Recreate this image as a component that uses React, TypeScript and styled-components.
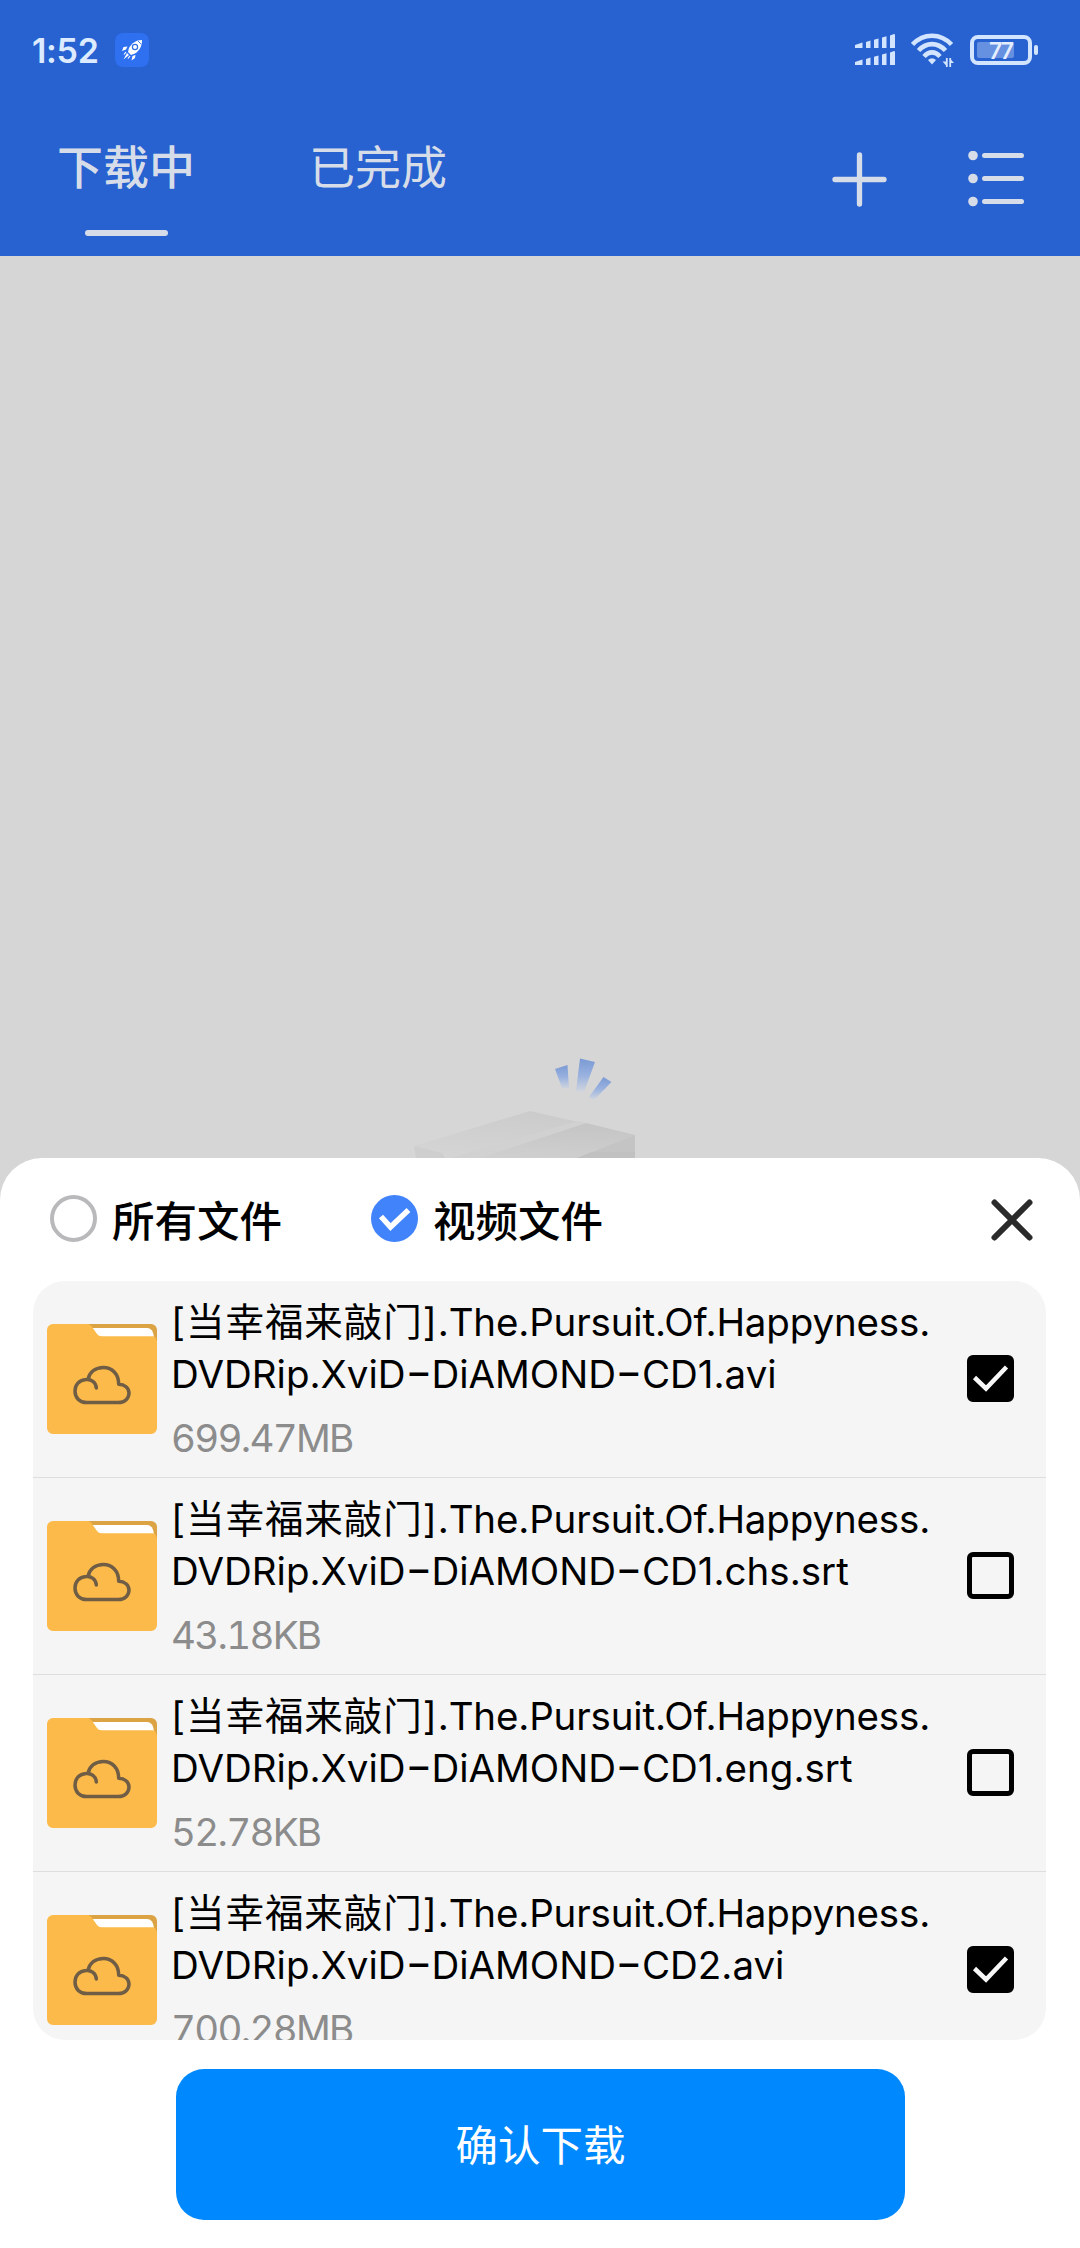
import React, { Fragment, useState } from "react";
import styled, { createGlobalStyle } from "styled-components";

const GlobalStyle = createGlobalStyle`
  *, *::before, *::after { box-sizing: border-box; }
  body { margin: 0; background: #d6d6d6; }
  button { font: inherit; border: 0; padding: 0; background: none; color: inherit; }
  svg { display: block; flex: none; }
`;

const Page = styled.div`
  width: 1080px;
  height: 2248px;
  display: flex;
  flex-direction: column;
  overflow: hidden;
  background: #d6d6d6;
  font-family: Inter, "Noto Sans CJK SC", sans-serif;
`;

const Header = styled.header`
  height: 256px;
  flex: none;
  background: #2862d1;
  color: #d7dde8;
`;

const StatusBar = styled.div`
  height: 100px;
  display: flex;
  align-items: center;
  justify-content: space-between;
  padding: 0 42px 0 32px;
`;

const StatusGroup = styled.div<{ $gap: number }>`
  display: flex;
  align-items: center;
  gap: ${(p) => p.$gap}px;
`;

const Clock = styled.span`
  width: 67px;
  padding-top: 1px;
  font-size: 34px;
  line-height: 40px;
  font-weight: 600;
  letter-spacing: -0.3px;
  white-space: nowrap;
  color: #dcebff;
`;

const RocketBadge = styled.span`
  width: 34px;
  height: 34px;
  display: grid;
  place-items: center;
  border-radius: 8px;
  background: #2f70f0;
`;

const BatteryText = styled.text`
  font: 600 23px Inter, sans-serif;
  fill: #e4eeff;
`;

const NavBar = styled.nav`
  height: 156px;
  display: flex;
  justify-content: space-between;
  padding: 0 56px 0 57px;
`;

const Tabs = styled.div`
  display: flex;
  gap: 114px;
`;

const Tab = styled.button<{ $active: boolean }>`
  width: 138px;
  display: flex;
  flex-direction: column;
  align-items: center;
  padding-top: 36px;
  font-size: 46px;
  line-height: 62px;
  white-space: nowrap;
  font-weight: ${(p) => (p.$active ? 500 : 400)};

  &::after {
    content: "";
    width: 83px;
    height: 6px;
    margin-top: 32px;
    border-radius: 3px;
    background: ${(p) => (p.$active ? "#d7dde8" : "transparent")};
  }
`;

const Actions = styled.div`
  display: flex;
  gap: 81px;
  padding-top: 51px;
`;

const EmptyArea = styled.main`
  height: 902px;
  flex: none;
  display: flex;
  align-items: flex-end;
  justify-content: center;
  padding-right: 40px;
`;

const Sheet = styled.section`
  flex: 1;
  display: flex;
  flex-direction: column;
  border-radius: 42px 42px 0 0;
  background: #fff;
`;

const SheetHeader = styled.div`
  width: 100%;
  height: 123px;
  flex: none;
  display: flex;
  align-items: flex-start;
  padding: 37px 47px 0 50px;
`;

const FilterOption = styled.button`
  width: 321px;
  display: flex;
  align-items: center;
  gap: 15px;
  height: 47px;
  color: #000;
  font-size: 42.5px;
  font-weight: 500;
  white-space: nowrap;
`;

const Radio = styled.span<{ $on: boolean }>`
  width: 47px;
  height: 47px;
  flex: none;
  display: grid;
  place-items: center;
  border-radius: 50%;
  border: ${(p) => (p.$on ? "0" : "4px solid #b9b9bb")};
  background: ${(p) => (p.$on ? "#4083fb" : "#fff")};
`;

const CloseButton = styled.button`
  margin: 4px 0 0 auto;
`;

const FileList = styled.ul`
  width: 1013px;
  height: 759px;
  flex: none;
  margin: 0 0 0 33px;
  padding: 0;
  overflow: hidden;
  list-style: none;
  border-radius: 32px;
  background: #f5f5f5;
`;

const FileRow = styled.li`
  height: 197px;
  display: flex;
  align-items: flex-start;
  padding: 0 32px 0 14px;
  border-bottom: 1px solid #dedede;
`;

const FolderSlot = styled.span`
  padding-top: 43px;
`;

const FileInfo = styled.div`
  flex: 1;
  padding: 15px 0 0 14px;
`;

const FileName = styled.div`
  display: flex;
  flex-direction: column;
  font-size: 38.5px;
  line-height: 52px;
  color: #000;
`;

const NameLine = styled.span<{ $spacing?: number }>`
  height: 52px;
  white-space: nowrap;
  letter-spacing: ${(p) => p.$spacing ?? 0}px;
`;

const Bracketed = styled.span`
  letter-spacing: 0.95px;
`;

const Dash = styled.span`
  display: inline-block;
  margin: 0 4px;
  transform: scaleX(1.5);
  font-weight: 500;
  font-feature-settings: "case";
`;

const FileSize = styled.div`
  margin-top: 12px;
  font-size: 38.5px;
  line-height: 52px;
  letter-spacing: -1.7px;
  font-variant-numeric: tabular-nums;
  color: #8c8c8c;
`;

const CheckBox = styled.button<{ $on: boolean }>`
  width: 47px;
  height: 47px;
  flex: none;
  display: grid;
  place-items: center;
  margin-top: 74px;
  border: 5px solid #000;
  border-radius: 6px;
  background: ${(p) => (p.$on ? "#000" : "transparent")};
`;

const ConfirmButton = styled.button`
  width: 729px;
  height: 151px;
  margin: 29px 0 0 176px;
  padding-top: 2px;
  border-radius: 28px;
  background: #0089ff;
  color: #fff;
  font-size: 42.5px;
  line-height: 60px;
`;

const Rocket = () => (
  <svg width="22" height="22" viewBox="0 0 22 22" fill="#fff">
    <path d="M21 1C15 1 11 4 8 9l-1 4 3 3 4-1.500C19 11 21 7 21 1z" />
    <circle cx="14" cy="8" r="2.600" fill="#fff" stroke="#2f6fe8" strokeWidth="1.200" />
    <path d="M17 2l3.500 3.500" stroke="#2f6fe8" strokeWidth="0.900" />
    <path d="M6.500 7.500L2.500 8 1 12l4-1.500zM14.500 16l-.5 3-3.500 2.500 1-4.500zM6 14l2 2-5.500 4.500z" />
    <path d="M5 13l-2 2.500M9 17l-2 2.500" stroke="#fff" strokeWidth="1.200" />
  </svg>
);

const Signal = () => (
  <svg width="40" height="32" viewBox="0 0 40 32" fill="#d3e4ff">
    {[0, 17].map((y) => (
      <g key={y} transform={`translate(0 ${y})`}>
        <path d="M0 14v-3l7.500-2.500V14zM11 14V8l4.500-1.500V14zM19 14V5.800l4.500-1.300V14zM27 14V3.500l4.500-1.300V14zM35 14V1.500L39 0l1 .5V14z" />
      </g>
    ))}
  </svg>
);

const Wifi = () => (
  <svg width="43" height="34" viewBox="0 0 43 34" fill="none" stroke="#d3e4ff" strokeWidth="4.600">
    <path d="M1.500 11.500C12.500-.2 29.500-.2 40.500 11.500" />
    <path d="M7.500 17.500C15.500 9 26.500 9 34.500 17.500" />
    <path d="M13 23.500C18 18 24 18 29 23.500" />
    <path d="M17 27q4-3.500 8 0l-4 4.500z" fill="#d3e4ff" stroke="none" />
    <path d="M35.800 34V25M39.200 34V25" strokeWidth="1.800" />
    <path d="M36 33.500l-4.500-5H36zM39 25.500l4 4.500H39z" fill="#d3e4ff" stroke="none" />
  </svg>
);

const Battery = () => (
  <svg width="68" height="32" viewBox="0 0 68 32">
    <rect x="2" y="3" width="58" height="26" rx="6" fill="none" stroke="#d3e4ff" strokeWidth="4" />
    <rect x="7" y="8" width="37" height="16" rx="2" fill="#6690e0" />
    <rect x="64" y="11" width="4" height="10" rx="2" fill="#d3e4ff" />
    <BatteryText x="31.5" y="24.500" textAnchor="middle" textLength="25">77</BatteryText>
  </svg>
);

const Plus = () => (
  <svg width="55" height="57" viewBox="0 0 55 57" stroke="#d7dde8" strokeWidth="5.300" strokeLinecap="round">
    <path d="M27.500 4v49M3 28.500h49" />
  </svg>
);

const ListIcon = () => (
  <svg width="56" height="57" viewBox="0 0 56 57" stroke="#d7dde8" strokeWidth="5" strokeLinecap="round">
    {[4.5, 27.5, 50.5].map((y) => (
      <g key={y}>
        <circle cx="5" cy={y} r="4.800" fill="#d7dde8" stroke="none" />
        <path d={`M16.500 ${y}h37`} />
      </g>
    ))}
  </svg>
);

const EmptyBox = () => (
  <svg width="280" height="118" viewBox="380 1040 280 118">
    <defs>
      <linearGradient id="ray" x1="0" y1="0" x2="0" y2="1">
        <stop offset="0" stopColor="#7b9ad4" />
        <stop offset="0.5" stopColor="#98b1df" />
        <stop offset="1" stopColor="#d2d6de" />
      </linearGradient>
      <linearGradient id="lid" x1="0.6" y1="0" x2="0.1" y2="1">
        <stop offset="0" stopColor="#cbcbcb" />
        <stop offset="1" stopColor="#d5d5d5" />
      </linearGradient>
      <linearGradient id="lidRight" x1="0.5" y1="0" x2="0.3" y2="1">
        <stop offset="0" stopColor="#c5c5c5" />
        <stop offset="1" stopColor="#cfcfcf" />
      </linearGradient>
    </defs>
    <path d="M555 1069l12.500-4 1.500 24-7-1z" fill="url(#ray)" />
    <path d="M580 1058.500l15 3.500-11 30-8-1z" fill="url(#ray)" />
    <path d="M603.500 1077l8 5-17.500 18-5-3z" fill="url(#ray)" />
    <path d="M414 1146L530 1111l105 24v23H416z" fill="url(#lid)" />
    <path d="M480 1158L586 1123l49 12-58 23z" fill="url(#lidRight)" />
    <path d="M450 1158l128-37 8 2L480 1158z" fill="#d1d1d1" />
    <path d="M414 1146l28 7 3 5h-29z" fill="#cecece" />
    <path d="M577 1158l58-23v23z" fill="#c4c4c4" />
    <path d="M592 1152h43v6h-58z" fill="#c1c1c1" />
  </svg>
);

const Folder = () => (
  <svg width="110" height="110" viewBox="0 0 110 110">
    <path d="M36 0h68a6 6 0 0 1 6 6v20H36z" fill="#dba343" />
    <path d="M44 4h56q6 0 7 9v6H50z" fill="#fff" />
    <path d="M6 0h35.500q3 1 5 5l3.500 5q1.500 2.200 4.500 2.200H106q3 0 4 5.800v86a6 6 0 0 1-6 6H6a6 6 0 0 1-6-6V6a6 6 0 0 1 6-6z" fill="#fcba4a" />
    <path
      d="M49.300 64C49 58 44 55 39 55.500C32 56 28 61 28 67C28 74 33 78.600 39.500 78.600H71.500C78 78.600 82 74 82 69C82 64 77.500 60.200 71.700 60.200C71.700 50 65 43.500 56.500 43.500C48.500 43.500 42.500 48 41 55.500"
      fill="none"
      stroke="#6f5d45"
      strokeWidth="3.500"
      strokeLinecap="round"
      strokeLinejoin="round"
    />
  </svg>
);

const RadioTick = () => (
  <svg width="33" height="26" viewBox="0 0 33 26" fill="none" stroke="#fff" strokeWidth="5.500">
    <path d="M3 10.500l9.500 10.500L30.500 4" />
  </svg>
);

const BoxTick = () => (
  <svg width="37" height="30" viewBox="0 0 37 30" fill="none" stroke="#f7f7f7" strokeWidth="4.500">
    <path d="M2.500 13.500L14 24.500L34.500 3" />
  </svg>
);

const Cross = () => (
  <svg width="42" height="42" viewBox="0 0 42 42" stroke="#2b2b2b" strokeWidth="6" strokeLinecap="round">
    <path d="M3.500 3.500l35 35M38.500 3.500l-35 35" />
  </svg>
);

const FILES = [
  { tail: "DVDRip.XviD-DiAMOND-CD1.avi", size: "699.47MB", checked: true },
  { tail: "DVDRip.XviD-DiAMOND-CD1.chs.srt", size: "43.18KB", checked: false },
  { tail: "DVDRip.XviD-DiAMOND-CD1.eng.srt", size: "52.78KB", checked: false },
  { tail: "DVDRip.XviD-DiAMOND-CD2.avi", size: "700.28MB", checked: true },
];

const Dashed = ({ text }: { text: string }) => (
  <>
    {text.split("-").map((part, i) => (
      <Fragment key={i}>
        {i > 0 && <Dash>-</Dash>}
        {part}
      </Fragment>
    ))}
  </>
);

export default function App() {
  const [tab, setTab] = useState(0);
  const [filter, setFilter] = useState(1);
  const [checked, setChecked] = useState(FILES.map((f) => f.checked));

  const toggle = (index: number) =>
    setChecked((prev) => prev.map((on, i) => (i === index ? !on : on)));

  return (
    <Page>
      <GlobalStyle />
      <Header>
        <StatusBar>
          <StatusGroup $gap={16}>
            <Clock>1:52</Clock>
            <RocketBadge>
              <Rocket />
            </RocketBadge>
          </StatusGroup>
          <StatusGroup $gap={16}>
            <Signal />
            <Wifi />
            <Battery />
          </StatusGroup>
        </StatusBar>
        <NavBar>
          <Tabs>
            {["下载中", "已完成"].map((label, i) => (
              <Tab key={label} $active={tab === i} onClick={() => setTab(i)}>
                {label}
              </Tab>
            ))}
          </Tabs>
          <Actions>
            <Plus />
            <ListIcon />
          </Actions>
        </NavBar>
      </Header>
      <EmptyArea>
        <EmptyBox />
      </EmptyArea>
      <Sheet>
        <SheetHeader>
          {["所有文件", "视频文件"].map((label, i) => (
            <FilterOption key={label} onClick={() => setFilter(i)}>
              <Radio $on={filter === i}>{filter === i && <RadioTick />}</Radio>
              {label}
            </FilterOption>
          ))}
          <CloseButton>
            <Cross />
          </CloseButton>
        </SheetHeader>
        <FileList>
          {FILES.map((file, i) => (
            <FileRow key={file.tail}>
              <FolderSlot>
                <Folder />
              </FolderSlot>
              <FileInfo>
                <FileName>
                  <NameLine $spacing={-0.15}>
                    <Bracketed>[当幸福来敲门]</Bracketed>.The.Pursuit.Of.Happyness.
                  </NameLine>
                  <NameLine>
                    <Dashed text={file.tail} />
                  </NameLine>
                </FileName>
                <FileSize>{file.size}</FileSize>
              </FileInfo>
              <CheckBox $on={checked[i]} onClick={() => toggle(i)}>
                {checked[i] && <BoxTick />}
              </CheckBox>
            </FileRow>
          ))}
        </FileList>
        <ConfirmButton>确认下载</ConfirmButton>
      </Sheet>
    </Page>
  );
}
